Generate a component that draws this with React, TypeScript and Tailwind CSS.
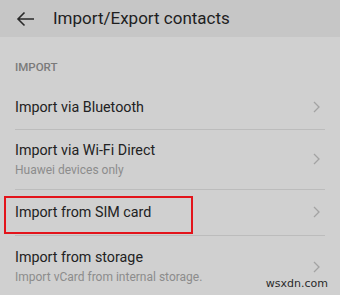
import React from 'react';

const Chevron = () => (
  <svg width="7" height="12" viewBox="0 0 7 12" className="shrink-0">
    <path d="M1 1l5 5-5 5" fill="none" stroke="#a3a3a3" strokeWidth="1.3" />
  </svg>
);

type Row = { title: string; sub?: string; h: string; boxed?: boolean };

const rows: Row[] = [
  { title: 'Import via Bluetooth', h: 'h-[44px]' },
  { title: 'Import via Wi-Fi Direct', sub: 'Huawei devices only', h: 'h-[60px]' },
  { title: 'Import from SIM card', h: 'h-[46px]', boxed: true },
  { title: 'Import from storage', sub: 'Import vCard from internal storage.', h: 'h-[62px]' },
];

export default function App() {
  return (
    <div
      className="relative w-[340px] h-[295px] overflow-hidden bg-[#d0d0d0]"
      style={{ fontFamily: 'Roboto, "Noto Sans", sans-serif' }}
    >
      <div className="h-[37px] bg-[#c6c6c6] flex items-center">
        <svg width="20" height="16" viewBox="0 0 20 16" className="ml-[16px]">
          <path d="M18 8H2M8.5 1.5L2 8l6.5 6.5" fill="none" stroke="#2a2a2a" strokeWidth="1.6" />
        </svg>
        <span className="ml-[17px] text-[17px] text-[#1e1e1e] leading-none">Import/Export contacts</span>
      </div>

      <div className="px-[15px]">
        <div className="pt-[25px] pb-[12px] text-[11.5px] font-medium text-[#7a7a7a] leading-none">IMPORT</div>
        {rows.map((r, i) => (
          <div
            key={r.title}
            className={`relative flex items-center justify-between ${r.h} ${i < rows.length - 1 ? 'border-b border-[#bcbcbc]' : ''}`}
          >
            <div className="flex flex-col">
              <span className="text-[14.3px] text-[#222] leading-[18px]">{r.title}</span>
              {r.sub && <span className="text-[12px] text-[#8c8c8c] leading-[16px] mt-[3px]">{r.sub}</span>}
            </div>
            <div className="mr-[5px]">
              <Chevron />
            </div>
            {r.boxed && (
              <div className="absolute left-[-11px] top-[6px] w-[189px] h-[38px] border-2 border-[#e3141b]" />
            )}
          </div>
        ))}
      </div>

      <div
        className="absolute right-[12px] top-[277px] text-[11px] text-[#2a2a2a] leading-[14px]"
        style={{ fontFamily: '"DejaVu Sans", sans-serif' }}
      >
        wsxdn.com
      </div>
    </div>
  );
}
